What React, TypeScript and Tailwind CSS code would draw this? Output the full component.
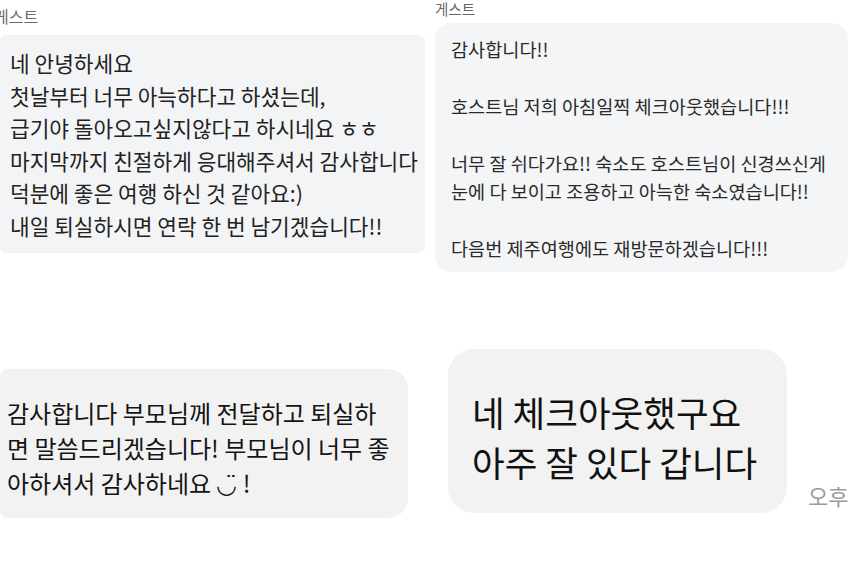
import React from "react";

const font = { fontFamily: '"Noto Sans CJK KR", "Noto Sans", sans-serif' };

export default function App() {
  return (
    <div
      className="w-[852px] h-[568px] overflow-hidden bg-white flex flex-col"
      style={font}
    >
      {/* top row */}
      <div className="flex h-[349px] shrink-0">
        {/* left column */}
        <div className="w-[425px] shrink-0 flex flex-col">
          <div className="mt-[6px] ml-[-6px] h-[20px] text-[16px] leading-[20px] text-[#6b6b6b] whitespace-nowrap">
            게스트
          </div>
          <div className="mt-[9px] w-[425px] h-[218px] bg-[#f3f4f6] rounded-[6px] pl-[10px] pt-[12px] text-[21.4px] leading-[32.6px] text-[#222] whitespace-nowrap">
            <div>네 안녕하세요</div>
            <div>첫날부터 너무 아늑하다고 하셨는데,</div>
            <div>급기야 돌아오고싶지않다고 하시네요 ㅎㅎ</div>
            <div>마지막까지 친절하게 응대해주셔서 감사합니다</div>
            <div>덕분에 좋은 여행 하신 것 같아요:)</div>
            <div>내일 퇴실하시면 연락 한 번 남기겠습니다!!</div>
          </div>
        </div>
        {/* right column */}
        <div className="ml-[10px] w-[413px] shrink-0 flex flex-col">
          <div className="mt-0 h-[19px] text-[14.5px] leading-[18px] text-[#666] whitespace-nowrap">
            게스트
          </div>
          <div className="mt-[4px] w-[413px] h-[249px] bg-[#f4f5f7] rounded-[16px] pl-[16px] pt-[12px] text-[18.6px] leading-[28.4px] text-[#2a2a2a] whitespace-nowrap">
            <div>감사합니다!!</div>
            <div>&nbsp;</div>
            <div>호스트님 저희 아침일찍 체크아웃했습니다!!!</div>
            <div>&nbsp;</div>
            <div>너무 잘 쉬다가요!! 숙소도 호스트님이 신경쓰신게</div>
            <div>눈에 다 보이고 조용하고 아늑한 숙소였습니다!!</div>
            <div>&nbsp;</div>
            <div>다음번 제주여행에도 재방문하겠습니다!!!</div>
          </div>
        </div>
      </div>

      {/* bottom row */}
      <div className="flex items-start">
        <div className="mt-[20px] w-[408px] h-[149px] shrink-0 bg-[#f2f2f2] rounded-r-[20px] rounded-l-[8px] pl-[7px] pt-[26px] text-[24px] leading-[35px] text-[#141414] whitespace-nowrap">
          <div>감사합니다 부모님께 전달하고 퇴실하</div>
          <div>면 말씀드리겠습니다! 부모님이 너무 좋</div>
          <div>아하셔서 감사하네요 ◡̈ !</div>
        </div>
        <div className="ml-[40px] w-[339px] h-[164px] shrink-0 bg-[#f2f2f2] rounded-[26px] pl-[24px] pt-[38px] text-[35.5px] leading-[50px] text-[#111] whitespace-nowrap">
          <div>네 체크아웃했구요</div>
          <div>아주 잘 있다 갑니다</div>
        </div>
        <div className="ml-[21px] mt-[132px] text-[22px] leading-[28px] text-[#9a9a9a] whitespace-nowrap">
          오후
        </div>
      </div>
    </div>
  );
}
